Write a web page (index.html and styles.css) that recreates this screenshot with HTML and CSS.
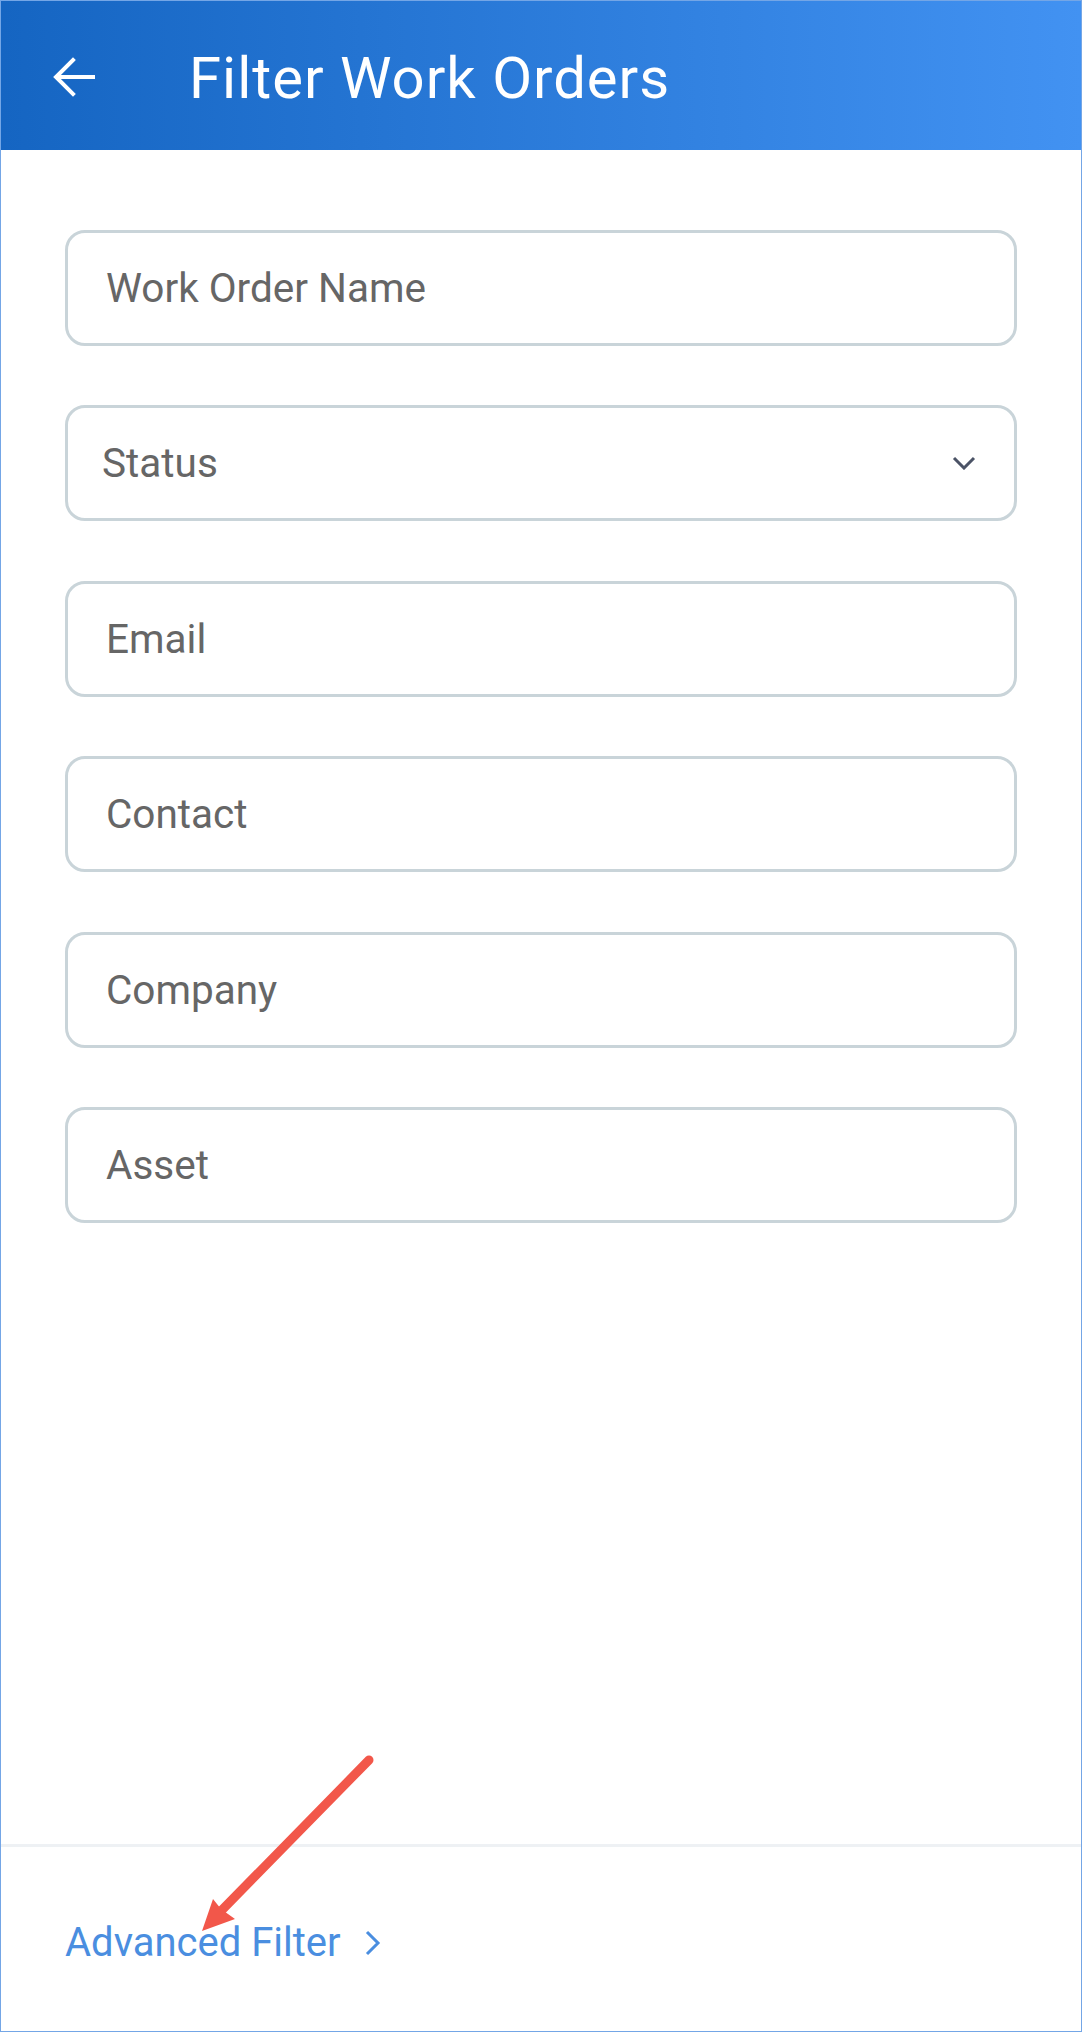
FILE: index.html
```html
<!DOCTYPE html>
<html lang="en">
<head>
    <meta charset="UTF-8">
    <meta name="viewport" content="width=device-width, initial-scale=1.0">
    <title>Filter Work Orders</title>
    <link rel="stylesheet" href="styles.css">
</head>
<body>
    <div class="screen">
        <!-- Barra superior -->
        <header class="toolbar">
            <button class="backButton" aria-label="Back">
                <svg width="42" height="40" viewBox="0 0 42 40">
                    <path d="M40 20 H4 M20 3 L3 20 L20 37" fill="none" stroke="#fff" stroke-width="4" stroke-linecap="square"/>
                </svg>
            </button>
            <h1 class="toolbarTitle">Filter Work Orders</h1>
        </header>

        <!-- Campos del filtro -->
        <main class="filterForm">
            <input class="field" type="text" placeholder="Work Order Name">
            <div class="field selectField">
                <span>Status</span>
                <svg width="24" height="14" viewBox="0 0 24 14">
                    <path d="M2 2 L12 12 L22 2" fill="none" stroke="#4b5366" stroke-width="3"/>
                </svg>
            </div>
            <input class="field" type="text" placeholder="Email">
            <input class="field" type="text" placeholder="Contact">
            <input class="field" type="text" placeholder="Company">
            <input class="field" type="text" placeholder="Asset">
        </main>

        <!-- Pie con enlace al filtro avanzado -->
        <footer class="footerBar">
            <a class="advancedLink" href="#">
                Advanced Filter
                <svg width="16" height="26" viewBox="0 0 16 26">
                    <path d="M2 2 L13 13 L2 24" fill="none" stroke="#4a8ee0" stroke-width="3"/>
                </svg>
            </a>
        </footer>

        <!-- Flecha de anotación -->
        <svg class="annotation" width="200" height="200" viewBox="0 0 200 200">
            <line x1="172" y1="15" x2="24" y2="166" stroke="#f2574a" stroke-width="9" stroke-linecap="round"/>
            <polygon points="5,186 16,154 24,164 38,174" fill="#f2574a"/>
        </svg>
    </div>
</body>
</html>
```

FILE: styles.css
```css
/* Estilos generales */
body {
    margin: 0;
    padding: 0;
    font-family: Roboto, "Liberation Sans", sans-serif;
    background: #fff;
}

.screen {
    position: relative;
    box-sizing: border-box;
    width: 1082px;
    height: 2032px;
    border: 1px solid #74a6e6;
    display: flex;
    flex-direction: column;
    overflow: hidden;
}

/* Barra superior */
.toolbar {
    height: 149px;
    display: flex;
    align-items: center;
    background: linear-gradient(to right, #1565c2, #4292f2);
    flex-shrink: 0;
}

.backButton {
    background: none;
    border: none;
    padding: 0;
    margin: 2px 0 0 52px;
    width: 42px;
    height: 40px;
    display: flex;
}

.toolbarTitle {
    margin: 4px 0 0 94px;
    color: #fff;
    font-size: 58px;
    font-weight: 400;
    letter-spacing: 1px;
}

/* Campos */
.filterForm {
    flex: 1;
    display: flex;
    flex-direction: column;
    gap: 59.4px;
    padding: 80px 64px 0;
}

.field {
    box-sizing: border-box;
    width: 100%;
    height: 116px;
    border: 3px solid #c9d4d9;
    border-radius: 20px;
    padding: 0 38px;
    font-family: Roboto, "Liberation Sans", sans-serif;
    font-size: 40.5px;
    color: #666;
    background: #fff;
    outline: none;
}

.field::placeholder {
    color: #666;
}

.selectField {
    display: flex;
    align-items: center;
    justify-content: space-between;
    padding: 0 38px 0 34px;
}

/* Pie */
.footerBar {
    flex-shrink: 0;
    box-sizing: border-box;
    height: 187px;
    border-top: 3px solid #eef1f4;
    display: flex;
    align-items: center;
    padding: 7px 64px 0;
}

.advancedLink {
    display: flex;
    align-items: center;
    gap: 24px;
    color: #4a8ee0;
    text-decoration: none;
    font-size: 40px;
}

.annotation {
    position: absolute;
    left: 196px;
    top: 1744px;
}
```
